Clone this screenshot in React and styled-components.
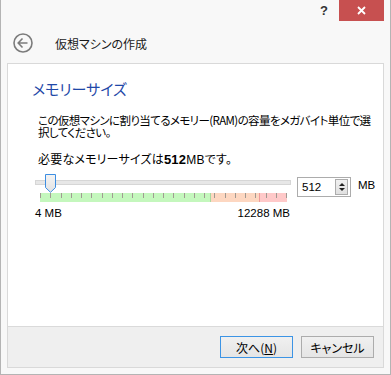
import React from 'react';
import styled, { createGlobalStyle } from 'styled-components';

const GlobalStyle = createGlobalStyle`
  html, body {
    margin: 0;
    padding: 0;
    background: #ffffff;
  }
  * {
    box-sizing: border-box;
  }
`;

const JP = `'Noto Sans CJK JP', 'Noto Sans', sans-serif`;
const NUM = `'Liberation Sans', Arial, sans-serif`;

const Window = styled.div`
  width: 391px;
  height: 375px;
  display: flex;
  flex-direction: column;
  background: #f8f8f8;
  border: 1px solid #b4b4b4;
  border-top: none;
  font-family: ${JP};
  font-feature-settings: 'palt';
  color: #000;
`;

const TitleBar = styled.div`
  height: 21px;
  display: flex;
  justify-content: flex-end;
  align-items: stretch;
  padding-right: 6px;
`;

const HelpButton = styled.div`
  width: 30px;
  display: flex;
  align-items: center;
  justify-content: center;
  font-family: ${NUM};
  font-weight: bold;
  font-size: 13px;
  color: #333;
`;

const CloseButton = styled.div`
  width: 45px;
  background: #c75050;
  display: flex;
  align-items: center;
  justify-content: center;
`;

const Header = styled.div`
  height: 42px;
  display: flex;
  align-items: center;
  padding-left: 12px;
  padding-top: 2px;
`;

const Title = styled.div`
  margin-left: 22px;
  font-size: 12px;
  color: #1a1a1a;
`;

const Panel = styled.div`
  flex: 1;
  margin: 0 6px 6px 6px;
  border: 1px solid #d9d9d9;
  display: flex;
  flex-direction: column;
`;

const Content = styled.div`
  flex: 1;
  background: #ffffff;
  padding: 15px 0 0 24px;
`;

const Heading = styled.div`
  font-size: 15px;
  line-height: 20px;
  color: #1f48a8;
`;

const Body = styled.div`
  margin-left: 6px;
  font-size: 12px;
`;

const Line = styled.div`
  margin-top: ${({ $top }) => $top}px;
  line-height: 12px;
  height: 12px;
  white-space: nowrap;
  font-size: ${({ $tight }) => ($tight ? '11.5px' : '12px')};
  letter-spacing: ${({ $tight }) => ($tight ? '-0.6px' : '0.2px')};

  b {
    font-family: ${NUM};
    font-weight: bold;
    font-size: 13px;
  }
  span.mb {
    font-family: ${NUM};
  }
`;

const SliderRow = styled.div`
  display: flex;
  align-items: flex-start;
  margin: 9px 0 0 -3px;
`;

const SliderArea = styled.div`
  width: 256px;
  display: flex;
  flex-direction: column;
`;

const TrackBox = styled.div`
  position: relative;
  height: 19px;
  padding-top: 6px;
`;

const Track = styled.div`
  height: 5px;
  background: #e7e7e7;
  border: 1px solid #d6d6d6;
`;

const Thumb = styled.svg`
  position: absolute;
  top: 0;
  width: 11px;
  height: 19px;
`;

const TickBand = styled.div`
  height: 9px;
  margin: 0 4px 0 5px;
  display: flex;
  justify-content: space-between;
  background: linear-gradient(
    to right,
    #c4f7bd 0,
    #c4f7bd 170px,
    #a8d8a0 170px,
    #a8d8a0 171px,
    #fdd7c1 171px,
    #fdd7c1 219px,
    #f09a9a 219px,
    #f09a9a 220px,
    #ffc9c9 220px
  );
`;

const Tick = styled.div`
  width: 1px;
  height: 5px;
  background: #a19a92;
`;

const Scale = styled.div`
  display: flex;
  justify-content: space-between;
  margin-top: 4px;
  font-family: ${NUM};
  font-size: 11.5px;
  line-height: 14px;
  padding-right: 1px;
`;

const SpinBox = styled.div`
  margin: 3px 0 0 6px;
  width: 54px;
  height: 20px;
  border: 1px solid #acacac;
  background: #fff;
  display: flex;
  align-items: center;
  padding: 2px;
`;

const SpinValue = styled.div`
  flex: 1;
  font-family: ${NUM};
  font-size: 11.5px;
  padding-left: 2px;
`;

const SpinButtons = styled.div`
  width: 13px;
  height: 16px;
  border: 1px solid #acacac;
  background: linear-gradient(#f0f0f0, #e0e0e0);
  display: flex;
  flex-direction: column;
  align-items: center;
  justify-content: space-around;
  padding: 2px 0;
`;

const Arrow = styled.div`
  width: 0;
  height: 0;
  border-left: 3px solid transparent;
  border-right: 3px solid transparent;
  ${({ $up }) => ($up ? 'border-bottom: 3px solid #222;' : 'border-top: 3px solid #222;')}
`;

const Unit = styled.div`
  margin: 5px 0 0 7px;
  font-family: ${NUM};
  font-size: 11.5px;
`;

const Footer = styled.div`
  height: 41px;
  background: #efefef;
  border-top: 1px solid #dadada;
  display: flex;
  justify-content: flex-end;
  align-items: center;
  gap: 8px;
  padding-right: 9px;
`;

const Button = styled.div`
  width: 73px;
  height: 22px;
  display: flex;
  align-items: center;
  justify-content: center;
  font-size: 12px;
  background: linear-gradient(#f0f0f0, #e5e5e5);
  border: 1px solid ${({ $primary }) => ($primary ? '#3c94e5' : '#acacac')};

  u {
    text-decoration: underline;
  }
`;

const MIN = 4;
const MAX = 12288;
const VALUE = 512;
const TICK_WIDTH = 246;

const App = () => {
  const thumbCenter = 5 + ((VALUE - MIN) / (MAX - MIN)) * TICK_WIDTH;
  const ticks = Array.from({ length: 25 });

  return (
    <>
      <GlobalStyle />
      <Window>
        <TitleBar>
          <HelpButton>?</HelpButton>
          <CloseButton>
            <svg width="9" height="9" viewBox="0 0 9 9">
              <path d="M1 1 L8 8 M8 1 L1 8" stroke="#fff" strokeWidth="1.8" />
            </svg>
          </CloseButton>
        </TitleBar>
        <Header>
          <svg width="20" height="20" viewBox="0 0 20 20">
            <circle cx="10" cy="10" r="9" fill="none" stroke="#7b7b7b" strokeWidth="1.6" />
            <path d="M5.5 10 H14.5 M9.5 5.5 L5.2 10 L9.5 14.5" fill="none" stroke="#7b7b7b" strokeWidth="1.6" />
          </svg>
          <Title>仮想マシンの作成</Title>
        </Header>
        <Panel>
          <Content>
            <Heading>メモリーサイズ</Heading>
            <Body>
              <Line $top={15} $tight>
                この仮想マシンに割り当てるメモリー(RAM)の容量をメガバイト単位で選
              </Line>
              <Line $top={0} $tight>
                択してください。
              </Line>
              <Line $top={15}>
                必要なメモリーサイズは<b>512</b>
                <span className="mb">MB</span>です。
              </Line>
              <SliderRow>
                <SliderArea>
                  <TrackBox>
                    <Track />
                    <Thumb viewBox="0 0 11 19" style={{ left: thumbCenter - 5.5 }}>
                      <defs>
                        <linearGradient id="thumbFill" x1="0" y1="0" x2="0" y2="1">
                          <stop offset="0" stopColor="#f4f4f4" />
                          <stop offset="1" stopColor="#e2e2e2" />
                        </linearGradient>
                      </defs>
                      <path
                        d="M0.5 0.5 H10.5 V13.5 L5.5 18.3 L0.5 13.5 Z"
                        fill="url(#thumbFill)"
                        stroke="#3d8ee2"
                      />
                    </Thumb>
                  </TrackBox>
                  <TickBand>
                    {ticks.map((_, i) => (
                      <Tick key={i} />
                    ))}
                  </TickBand>
                  <Scale>
                    <span>4 MB</span>
                    <span>12288 MB</span>
                  </Scale>
                </SliderArea>
                <SpinBox>
                  <SpinValue>512</SpinValue>
                  <SpinButtons>
                    <Arrow $up />
                    <Arrow />
                  </SpinButtons>
                </SpinBox>
                <Unit>MB</Unit>
              </SliderRow>
            </Body>
          </Content>
          <Footer>
            <Button $primary>
              次へ(<u>N</u>)
            </Button>
            <Button>キャンセル</Button>
          </Footer>
        </Panel>
      </Window>
    </>
  );
};

export default App;
